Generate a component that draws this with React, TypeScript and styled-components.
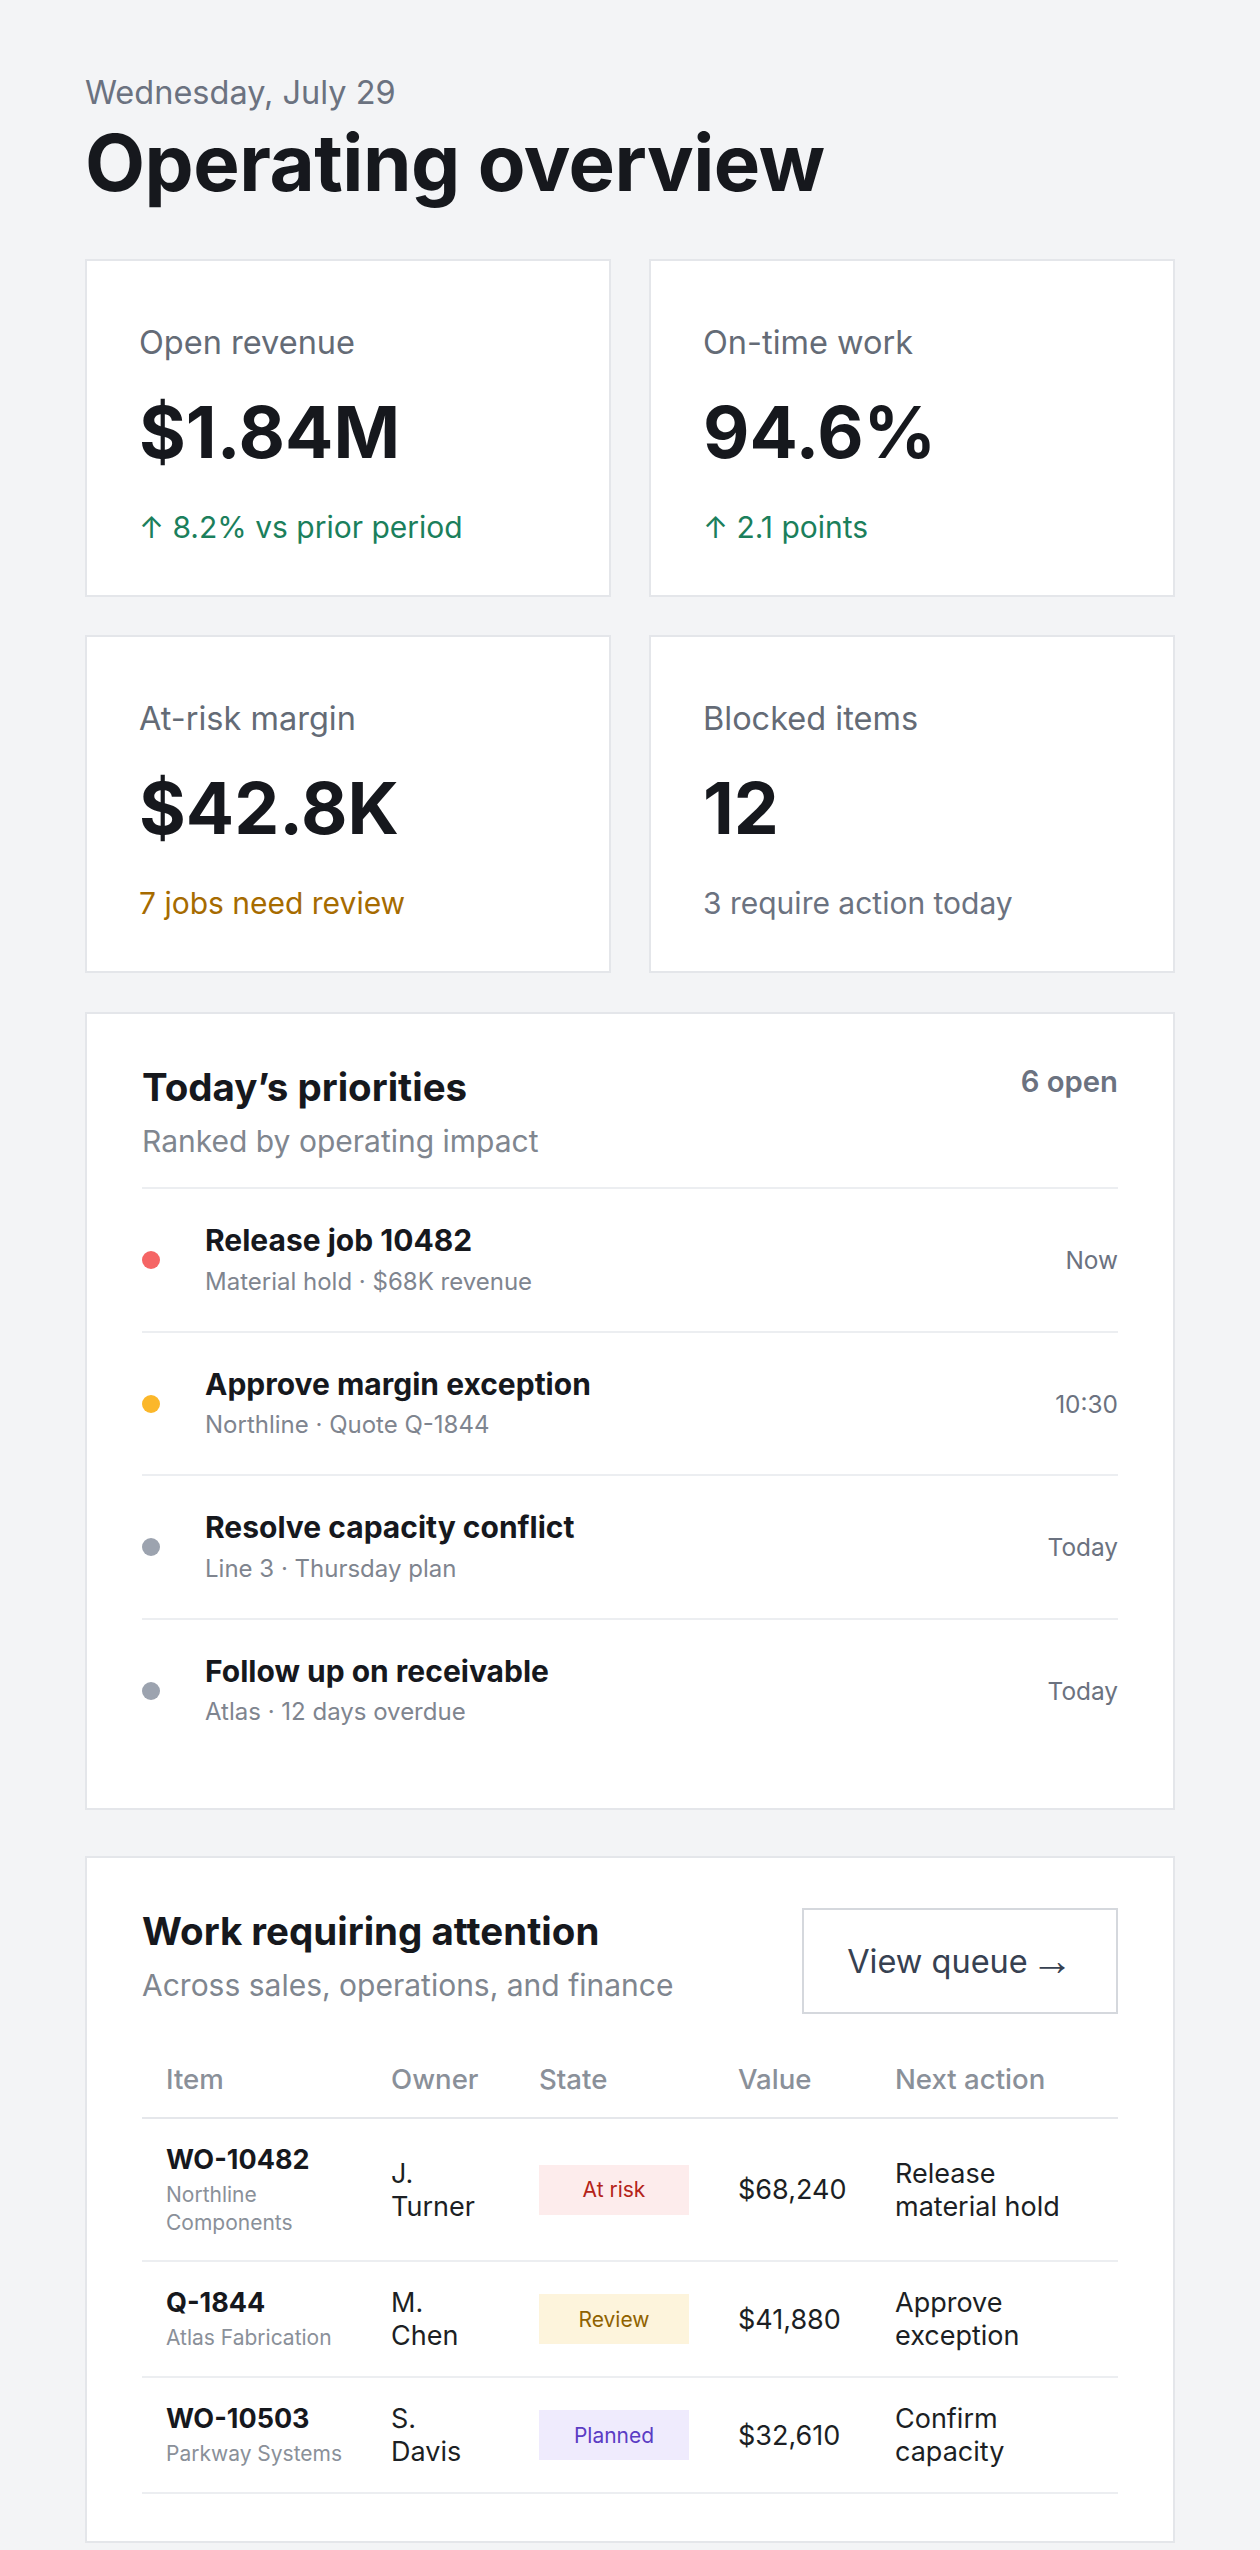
import styled, { createGlobalStyle } from "styled-components";

const GlobalStyle = createGlobalStyle`
  * { box-sizing: border-box; }
  body {
    margin: 0;
    background: #f3f4f6;
    font-family: Inter, "Noto Sans", sans-serif;
    color: #16181d;
  }
`;

const Page = styled.main`
  padding: 73px 85px 60px;
`;

const DateLine = styled.p`
  margin: 0;
  font-size: 32.5px;
  line-height: 39px;
  color: #6b7280;
`;

const Title = styled.h1`
  margin: 8px 0 0;
  font-size: 78px;
  line-height: 86px;
  font-weight: 700;
  letter-spacing: -0.5px;
  color: #16181d;
`;

const StatGrid = styled.section`
  display: grid;
  grid-template-columns: 1fr 1fr;
  gap: 38px;
  margin-top: 53px;
`;

const StatCard = styled.div`
  background: #fff;
  border: 2px solid #e4e6ea;
  padding: 61px 52px 47px;
`;

const StatLabel = styled.div`
  font-size: 32.5px;
  line-height: 41px;
  color: #646b76;
`;

const StatValue = styled.div`
  margin-top: 30px;
  font-size: 71.5px;
  line-height: 79px;
  font-weight: 700;
  color: #16181d;
`;

const toneColors = {
  up: "#1b7f5c",
  warn: "#a66b00",
  muted: "#6b7280",
};

const StatNote = styled.div<{ $tone: keyof typeof toneColors }>`
  margin-top: 35px;
  font-size: 30px;
  line-height: 41px;
  color: ${(p) => toneColors[p.$tone]};
`;

const Panel = styled.section<{ $top: number; $bottom: number }>`
  margin-top: ${(p) => p.$top}px;
  background: #fff;
  border: 2px solid #e4e6ea;
  padding: 50px 55px ${(p) => p.$bottom}px;
`;

const PanelHead = styled.div`
  display: flex;
  justify-content: space-between;
  align-items: flex-start;
`;

const PanelTitle = styled.h2`
  margin: 0;
  font-size: 38.5px;
  line-height: 46px;
  font-weight: 700;
  color: #16181d;
`;

const PanelSub = styled.div`
  margin-top: 11px;
  font-size: 30px;
  line-height: 41px;
  color: #80868f;
`;

const OpenCount = styled.div`
  font-size: 29.25px;
  line-height: 36px;
  font-weight: 600;
  color: #6b7280;
`;

const PriorityList = styled.ul`
  list-style: none;
  margin: 25px 0 0;
  padding: 0;
`;

const PriorityRow = styled.li`
  display: flex;
  align-items: center;
  padding: 33px 0 32px;
  border-top: 2px solid #eceef1;
`;

const Dot = styled.span<{ $color: string }>`
  width: 18px;
  height: 18px;
  border-radius: 50%;
  background: ${(p) => p.$color};
  margin-right: 45px;
  flex-shrink: 0;
`;

const PriorityBody = styled.div`
  flex: 1;
`;

const PriorityTitle = styled.div`
  font-size: 30px;
  line-height: 36px;
  font-weight: 700;
  color: #16181d;
`;

const PriorityMeta = styled.div`
  margin-top: 6.5px;
  font-size: 24px;
  line-height: 34px;
  color: #7f858f;
`;

const PriorityWhen = styled.div`
  font-size: 24.4px;
  line-height: 34px;
  color: #6b7280;
`;

const QueueButton = styled.button`
  display: inline-flex;
  align-items: center;
  height: 106px;
  padding: 0 43px;
  border: 2px solid #d5d8dd;
  background: #fff;
  font-family: inherit;
  font-size: 32.5px;
  color: #374151;
  flex-shrink: 0;
  cursor: pointer;
`;

const Arrow = styled.span`
  margin-left: 3px;
  font-family: "Liberation Sans", Arial, sans-serif;
  font-size: 1.3em;
  line-height: 1;
`;

const Table = styled.table`
  width: 100%;
  margin-top: 28.5px;
  border-collapse: collapse;
  table-layout: fixed;
`;

const Th = styled.th`
  text-align: left;
  padding: 20px 24px 21.5px;
  font-size: 27.6px;
  line-height: 33px;
  font-weight: 500;
  color: #8a9099;
  border-bottom: 2px solid #e5e7eb;
`;

const Td = styled.td`
  padding: 24px;
  vertical-align: middle;
  font-size: 27px;
  line-height: 33px;
  color: #1c1f24;
  border-bottom: 2px solid #eceef1;
`;

const ItemId = styled.div`
  font-weight: 700;
  line-height: 34px;
  color: #16181d;
`;

const ItemSub = styled.div`
  margin-top: 4px;
  font-size: 21px;
  line-height: 27.6px;
  color: #8a9099;
`;

const badgeTones = {
  risk: { bg: "#fdecec", fg: "#b42318" },
  review: { bg: "#fdf4dc", fg: "#8f6200" },
  planned: { bg: "#efebfd", fg: "#5b3cc4" },
};

const Badge = styled.span<{ $tone: keyof typeof badgeTones }>`
  display: flex;
  align-items: center;
  justify-content: center;
  width: 150px;
  height: 50px;
  font-size: 21px;
  background: ${(p) => badgeTones[p.$tone].bg};
  color: ${(p) => badgeTones[p.$tone].fg};
`;

const stats = [
  { label: "Open revenue", value: "$1.84M", note: "↑ 8.2% vs prior period", tone: "up" as const },
  { label: "On-time work", value: "94.6%", note: "↑ 2.1 points", tone: "up" as const },
  { label: "At-risk margin", value: "$42.8K", note: "7 jobs need review", tone: "warn" as const },
  { label: "Blocked items", value: "12", note: "3 require action today", tone: "muted" as const },
];

const priorities = [
  { title: "Release job 10482", meta: "Material hold · $68K revenue", when: "Now", color: "#f56565" },
  { title: "Approve margin exception", meta: "Northline · Quote Q-1844", when: "10:30", color: "#fbb72a" },
  { title: "Resolve capacity conflict", meta: "Line 3 · Thursday plan", when: "Today", color: "#9ca3af" },
  { title: "Follow up on receivable", meta: "Atlas · 12 days overdue", when: "Today", color: "#9ca3af" },
];

const work = [
  { id: "WO-10482", client: "Northline Components", owner: "J. Turner", state: "At risk", tone: "risk" as const, value: "$68,240", next: "Release material hold" },
  { id: "Q-1844", client: "Atlas Fabrication", owner: "M. Chen", state: "Review", tone: "review" as const, value: "$41,880", next: "Approve exception" },
  { id: "WO-10503", client: "Parkway Systems", owner: "S. Davis", state: "Planned", tone: "planned" as const, value: "$32,610", next: "Confirm capacity" },
];

const columnWidths = [225, 148, 199, 157, 247];

export default function App() {
  return (
    <>
      <GlobalStyle />
      <Page>
        <DateLine>Wednesday, July 29</DateLine>
        <Title>Operating overview</Title>

        <StatGrid>
          {stats.map((s) => (
            <StatCard key={s.label}>
              <StatLabel>{s.label}</StatLabel>
              <StatValue>{s.value}</StatValue>
              <StatNote $tone={s.tone}>{s.note}</StatNote>
            </StatCard>
          ))}
        </StatGrid>

        <Panel $top={39} $bottom={47}>
          <PanelHead>
            <div>
              <PanelTitle>Today’s priorities</PanelTitle>
              <PanelSub>Ranked by operating impact</PanelSub>
            </div>
            <OpenCount>6 open</OpenCount>
          </PanelHead>
          <PriorityList>
            {priorities.map((p) => (
              <PriorityRow key={p.title}>
                <Dot $color={p.color} />
                <PriorityBody>
                  <PriorityTitle>{p.title}</PriorityTitle>
                  <PriorityMeta>{p.meta}</PriorityMeta>
                </PriorityBody>
                <PriorityWhen>{p.when}</PriorityWhen>
              </PriorityRow>
            ))}
          </PriorityList>
        </Panel>

        <Panel $top={46} $bottom={47}>
          <PanelHead>
            <div>
              <PanelTitle>Work requiring attention</PanelTitle>
              <PanelSub>Across sales, operations, and finance</PanelSub>
            </div>
            <QueueButton>
              View queue<Arrow>→</Arrow>
            </QueueButton>
          </PanelHead>
          <Table>
            <colgroup>
              {columnWidths.map((w, i) => (
                <col key={i} style={{ width: w }} />
              ))}
            </colgroup>
            <thead>
              <tr>
                <Th>Item</Th>
                <Th>Owner</Th>
                <Th>State</Th>
                <Th>Value</Th>
                <Th>Next action</Th>
              </tr>
            </thead>
            <tbody>
              {work.map((w) => (
                <tr key={w.id}>
                  <Td>
                    <ItemId>{w.id}</ItemId>
                    <ItemSub>{w.client}</ItemSub>
                  </Td>
                  <Td>{w.owner}</Td>
                  <Td>
                    <Badge $tone={w.tone}>{w.state}</Badge>
                  </Td>
                  <Td>{w.value}</Td>
                  <Td>{w.next}</Td>
                </tr>
              ))}
            </tbody>
          </Table>
        </Panel>
      </Page>
    </>
  );
}
